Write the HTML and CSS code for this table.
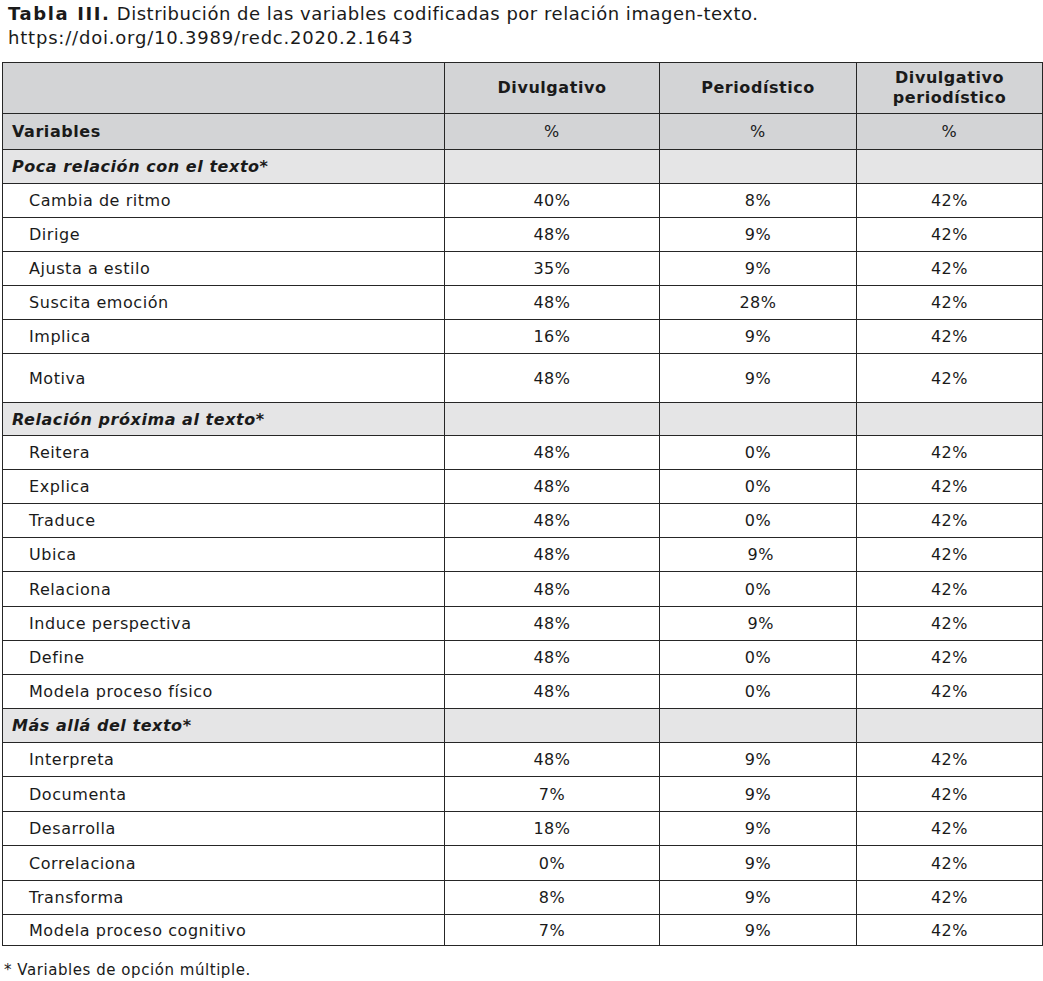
FILE: index.html
```html
<!DOCTYPE html>
<html lang="es">
<head>
<meta charset="utf-8">
<title>Tabla III</title>
<link rel="stylesheet" href="styles.css">
</head>
<body>
<p class="caption"><span class="line1"><b>Tabla III.</b> Distribución de las variables codificadas por relación imagen-texto.</span><br>https://doi.org/10.3989/redc.2020.2.1643</p>
<table class="data">
<colgroup><col class="c1"><col class="c2"><col class="c3"><col class="c4"></colgroup>
<thead>
<tr class="head"><th></th><th>Divulgativo</th><th>Periodístico</th><th>Divulgativo<br>periodístico</th></tr>
<tr class="units"><th class="lab">Variables</th><td>%</td><td>%</td><td>%</td></tr>
</thead>
<tbody>
<tr class="sec"><td class="lab">Poca relación con el texto*</td><td></td><td></td><td></td></tr>
<tr><td class="item">Cambia de ritmo</td><td>40%</td><td>8%</td><td>42%</td></tr>
<tr><td class="item">Dirige</td><td>48%</td><td>9%</td><td>42%</td></tr>
<tr><td class="item">Ajusta a estilo</td><td>35%</td><td>9%</td><td>42%</td></tr>
<tr><td class="item">Suscita emoción</td><td>48%</td><td>28%</td><td>42%</td></tr>
<tr><td class="item">Implica</td><td>16%</td><td>9%</td><td>42%</td></tr>
<tr class="tall"><td class="item">Motiva</td><td>48%</td><td>9%</td><td>42%</td></tr>
<tr class="sec short"><td class="lab">Relación próxima al texto*</td><td></td><td></td><td></td></tr>
<tr><td class="item">Reitera</td><td>48%</td><td>0%</td><td>42%</td></tr>
<tr><td class="item">Explica</td><td>48%</td><td>0%</td><td>42%</td></tr>
<tr><td class="item">Traduce</td><td>48%</td><td>0%</td><td>42%</td></tr>
<tr><td class="item">Ubica</td><td>48%</td><td>&nbsp;9%</td><td>42%</td></tr>
<tr class="wide"><td class="item">Relaciona</td><td>48%</td><td>0%</td><td>42%</td></tr>
<tr><td class="item">Induce perspectiva</td><td>48%</td><td>&nbsp;9%</td><td>42%</td></tr>
<tr><td class="item">Define</td><td>48%</td><td>0%</td><td>42%</td></tr>
<tr><td class="item">Modela proceso físico</td><td>48%</td><td>0%</td><td>42%</td></tr>
<tr class="sec"><td class="lab">Más allá del texto*</td><td></td><td></td><td></td></tr>
<tr><td class="item">Interpreta</td><td>48%</td><td>9%</td><td>42%</td></tr>
<tr class="wide"><td class="item">Documenta</td><td>7%</td><td>9%</td><td>42%</td></tr>
<tr><td class="item">Desarrolla</td><td>18%</td><td>9%</td><td>42%</td></tr>
<tr class="wide"><td class="item">Correlaciona</td><td>0%</td><td>9%</td><td>42%</td></tr>
<tr><td class="item">Transforma</td><td>8%</td><td>9%</td><td>42%</td></tr>
<tr class="last"><td class="item">Modela proceso cognitivo</td><td>7%</td><td>9%</td><td>42%</td></tr>
</tbody>
</table>
<p class="note">* Variables de opción múltiple.</p>
</body>
</html>
```
FILE: styles.css
```css
html, body {
  margin: 0;
  padding: 0;
  background: #ffffff;
  color: #111111;
  font-family: "DejaVu Sans", Verdana, sans-serif;
}
.caption {
  margin: 2px 0 0 8px;
  font-size: 18px;
  line-height: 24px;
  letter-spacing: 0.8px;
  color: #1a1a1a;
}
.caption .line1 { letter-spacing: 0.52px; }
.caption b {
  font-weight: bold;
  letter-spacing: 1.6px;
}
.data {
  margin: 12px 0 0 2px;
  width: 1040px;
  border-collapse: collapse;
  table-layout: fixed;
  font-size: 16px;
  letter-spacing: 0.55px;
  color: #1a1a1a;
}
.c1 { width: 442px; }
.c2 { width: 215px; }
.c3 { width: 197px; }
.c4 { width: 186px; }
.data th, .data td {
  border: 1px solid #262626;
  padding: 0;
  height: 33px;
  text-align: center;
  vertical-align: middle;
}
.data th { font-weight: bold; }
.head th {
  background: #d3d4d6;
  height: 50px;
  line-height: 20px;
}
.units th, .units td {
  background: #d3d4d6;
  height: 35px;
}
.units th.lab { text-align: left; padding-left: 9px; }
.sec td { background: #e5e5e6; }
.sec td.lab {
  text-align: left;
  padding-left: 9px;
  font-weight: bold;
  font-style: italic;
}
.item {
  text-align: left !important;
  padding-left: 26px !important;
}
.tall td { height: 48px; }
.short td { height: 32px; }
.wide td { height: 34px; }
.last td { height: 30px; }
.note {
  margin: 15px 0 0 4px;
  font-size: 15px;
  letter-spacing: 0.55px;
  color: #1a1a1a;
}
```
